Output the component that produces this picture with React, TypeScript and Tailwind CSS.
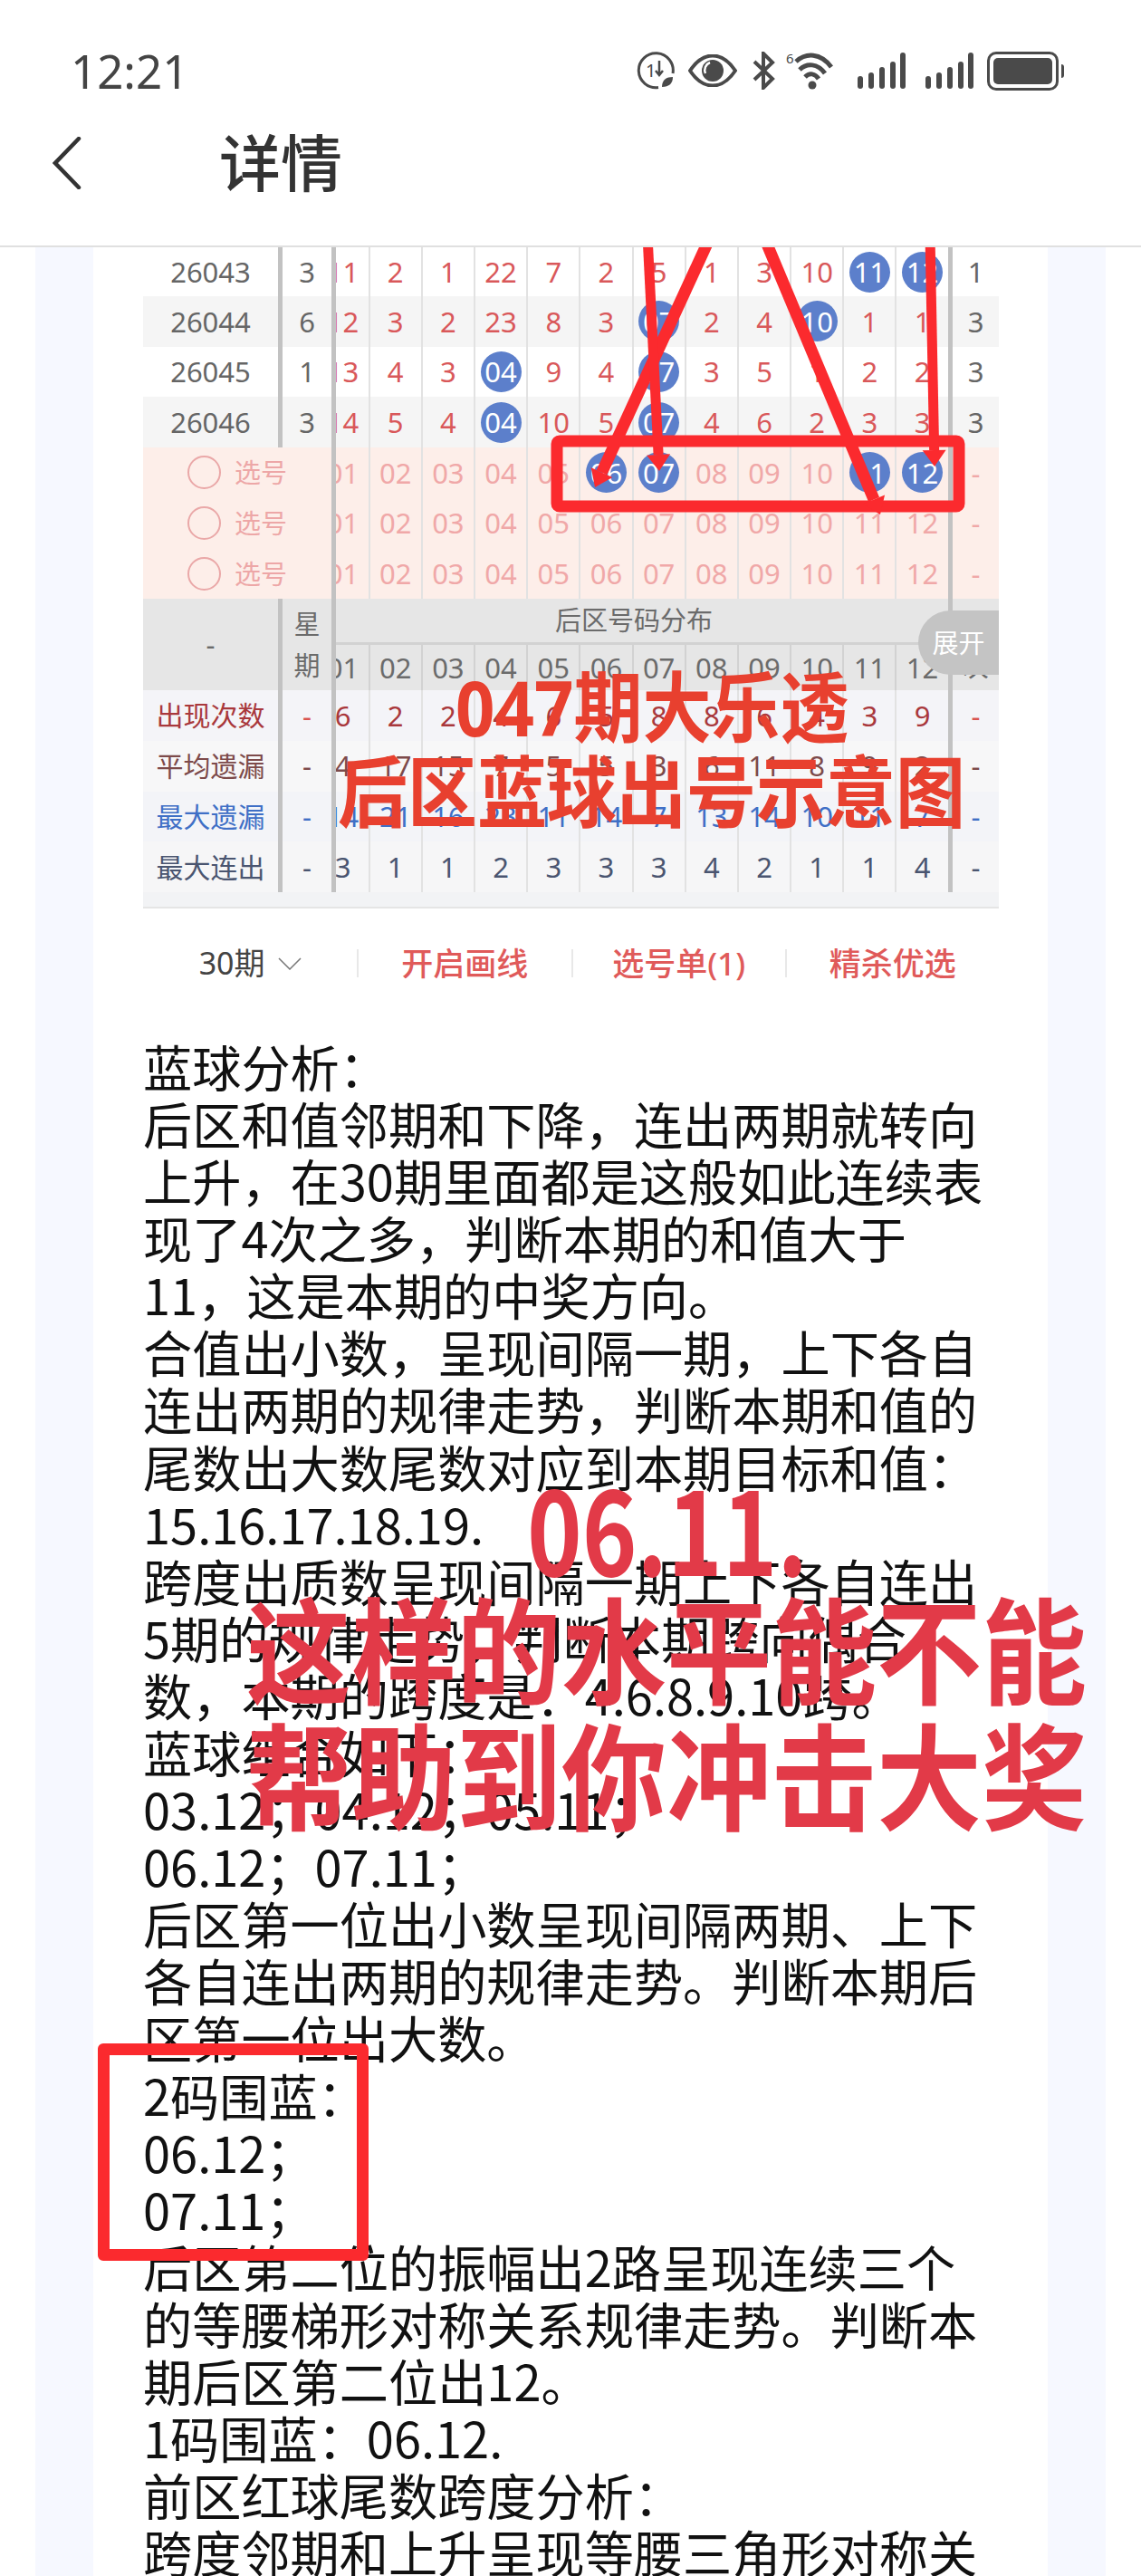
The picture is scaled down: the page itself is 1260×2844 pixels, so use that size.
import { ReactNode } from "react";

type Cell = string | { ball: string };
const b = (ball: string): Cell => ({ ball });

const history: { id: string; week: string; nums: Cell[]; last: string; first: boolean; bg: string }[] = [
  { id: "26043", week: "3", nums: ["11", "2", "1", "22", "7", "2", "5", "1", "3", "10", b("11"), b("12")], last: "1", first: true, bg: "bg-white" },
  { id: "26044", week: "6", nums: ["12", "3", "2", "23", "8", "3", b("07"), "2", "4", b("10"), "1", "1"], last: "3", first: false, bg: "bg-[#f5f5f5]" },
  { id: "26045", week: "1", nums: ["13", "4", "3", b("04"), "9", "4", b("07"), "3", "5", "1", "2", "2"], last: "3", first: false, bg: "bg-white" },
  { id: "26046", week: "3", nums: ["14", "5", "4", b("04"), "10", "5", b("07"), "4", "6", "2", "3", "3"], last: "3", first: false, bg: "bg-[#f5f5f5]" },
];

const numbers = ["01", "02", "03", "04", "05", "06", "07", "08", "09", "10", "11", "12"];

const picks: Cell[][] = [
  ["01", "02", "03", "04", "05", b("06"), b("07"), "08", "09", "10", b("11"), b("12")],
  numbers,
  numbers,
];

const stats = [
  { label: "出现次数", color: "text-[#a9383c]", dash: "text-[#d9534f]", bg: "bg-[#f4f4f8]", nums: ["6", "2", "2", "4", "6", "5", "8", "8", "6", "4", "3", "9"] },
  { label: "平均遗漏", color: "text-[#7d4a4a]", dash: "text-[#7d4a4a]", bg: "bg-[#f7f7f8]", nums: ["4", "17", "15", "7", "5", "5", "3", "6", "11", "8", "9", "2"] },
  { label: "最大遗漏", color: "text-[#3f6fc6]", dash: "text-[#3f6fc6]", bg: "bg-[#f3f4f8]", nums: ["14", "21", "16", "23", "11", "14", "7", "13", "14", "10", "11", "7"] },
  { label: "最大连出", color: "text-[#4a5570]", dash: "text-[#4a5570]", bg: "bg-[#f6f6f7]", nums: ["3", "1", "1", "2", "3", "3", "3", "4", "2", "1", "1", "4"] },
];

const article = [
  "蓝球分析：",
  "后区和值邻期和下降，连出两期就转向上升，在30期里面都是这般如此连续表现了4次之多，判断本期的和值大于11，这是本期的中奖方向。",
  "合值出小数，呈现间隔一期，上下各自连出两期的规律走势，判断本期和值的尾数出大数尾数对应到本期目标和值：",
  "15.16.17.18.19.",
  "跨度出质数呈现间隔一期上下各自连出5期的规律走势，判断本期跨向偶合数，本期的跨度是：4.6.8.9.10跨。",
  "蓝球组合如下：",
  "03.12；04.12；05.11；",
  "06.12；07.11；",
  "后区第一位出小数呈现间隔两期、上下各自连出两期的规律走势。判断本期后区第一位出大数。",
  "2码围蓝：",
  "06.12；",
  "07.11；",
  "后区第二位的振幅出2路呈现连续三个的等腰梯形对称关系规律走势。判断本期后区第二位出12。",
  "1码围蓝：06.12.",
  "前区红球尾数跨度分析：",
  "跨度邻期和上升呈现等腰三角形对称关系规律走势，判断本期跨度继续上升。",
];

const Bars = () => (
  <svg width="53" height="40" viewBox="0 0 53 40" fill="#4a4a4a">
    <rect x="0" y="26" width="6" height="14" rx="3" />
    <rect x="12" y="22" width="6" height="18" rx="3" />
    <rect x="24" y="16" width="6" height="24" rx="3" />
    <rect x="36" y="10" width="6" height="30" rx="3" />
    <rect x="47" y="0" width="6" height="40" rx="3" />
  </svg>
);

const StatusIcons = () => (
  <div className="flex items-center">
    <svg width="42" height="42" viewBox="0 0 42 42" fill="none" stroke="#4a4a4a" strokeWidth="3">
      <path d="M24 39.5A19 19 0 1 1 40 24" />
      <text x="10" y="28" fontSize="20" fill="#4a4a4a" stroke="none">1</text>
      <path d="M25 10v16M21 21l4 5 4-5" strokeWidth="2.5" />
      <path d="M28 39c0-8 5-11 12-11 0 7-4 11-12 11z" fill="#4a4a4a" stroke="none" />
    </svg>
    <svg className="ml-[15px]" width="54" height="36" viewBox="0 0 54 36">
      <path d="M2 18C10 6 18 1.500 27 1.500S44 6 52 18C44 30 36 34.500 27 34.500S10 30 2 18z" fill="none" stroke="#4a4a4a" strokeWidth="4" />
      <circle cx="27" cy="18" r="12" fill="#4a4a4a" />
      <path d="M24 9a9 9 0 0 0-5 12" fill="none" stroke="#fff" strokeWidth="2.500" />
    </svg>
    <svg className="ml-[16px]" width="26" height="42" viewBox="0 0 26 42" fill="none" stroke="#4a4a4a" strokeWidth="4">
      <path d="M3 11l20 19-10 10V2l10 10L3 31" />
    </svg>
    <svg className="ml-[12px]" width="57" height="42" viewBox="0 0 57 42" fill="none" stroke="#4a4a4a" strokeWidth="5">
      <text x="0" y="13" fontSize="15" fill="#4a4a4a" stroke="none">6</text>
      <path d="M11 11C22 1 38 1 50 17" />
      <path d="M15 20C23 12 35 13 43 24" />
      <path d="M21 28C26 23 32 24 36 30" />
      <circle cx="29" cy="37" r="4.500" fill="#4a4a4a" stroke="none" />
    </svg>
    <div className="ml-[22px]"><Bars /></div>
    <div className="ml-[22px]"><Bars /></div>
    <div className="ml-[15px] flex items-center">
      <div className="h-[43px] w-[79px] rounded-[10px] border-[3px] border-[#4a4a4a] p-[4px]">
        <div className="h-full w-full rounded-[5px] bg-[#4a4a4a]" />
      </div>
      <div className="ml-[3px] h-[15px] w-[3px] rounded-r bg-[#4a4a4a]" />
    </div>
  </div>
);

const Num = ({ cell, color }: { cell: Cell; color: string }) => (
  <div className={`flex h-full w-[58.2px] shrink-0 items-center justify-center border-r-2 border-[#e2e2e2] ${color}`}>
    {typeof cell === "string" ? (
      cell
    ) : (
      <span className="flex h-[45px] w-[45px] items-center justify-center rounded-full bg-[#5c7fcb] text-white">{cell.ball}</span>
    )}
  </div>
);

const NumStrip = ({ cells, color }: { cells: Cell[]; color: string }) => (
  <div className="h-full w-[676px] overflow-hidden">
    <div className="-ml-[20.6px] flex h-full w-[699px]">
      {cells.map((c, i) => (
        <Num key={i} cell={c} color={color} />
      ))}
    </div>
  </div>
);

const Row = ({ className, children }: { className: string; children: ReactNode }) => (
  <div className={`flex items-center text-[31px] ${className}`}>{children}</div>
);

const Sep = "border-r-[5px] border-[#c2c2c2]";

const Table = () => (
  <div className="w-[945px]">
    {history.map((r) => (
      <Row key={r.id} className={`${r.first ? "h-[54px]" : "h-[55.7px]"} ${r.bg}`}>
        <div className={`flex h-full w-[154px] items-center justify-center ${Sep} text-[#666]`}>{r.id}</div>
        <div className={`flex h-full w-[59px] items-center justify-center ${Sep} text-[#666]`}>{r.week}</div>
        <NumStrip cells={r.nums} color="text-[#d9585a]" />
        <div className="flex h-full w-[56px] items-center justify-center border-l-[5px] border-[#c2c2c2] text-[#666]">{r.last}</div>
      </Row>
    ))}
    {picks.map((cells, i) => (
      <Row key={i} className="h-[55.7px] bg-[#fdeee9]">
        <div className={`flex h-full w-[213px] items-center ${Sep} pl-[49px] text-[29px] text-[#eda7a7]`}>
          <span className="h-[37px] w-[37px] rounded-full border-2 border-[#eaa8a8]" />
          <span className="ml-[15px]">选号</span>
        </div>
        <NumStrip cells={cells} color="text-[#f0a8a8]" />
        <div className="flex h-full w-[56px] items-center justify-center border-l-[5px] border-[#c2c2c2] text-[#f0a8a8]">-</div>
      </Row>
    ))}
    <div className="relative flex h-[101px] items-stretch bg-[#e6e6e6] text-[31px] text-[#6b6b6b]">
      <div className={`flex w-[154px] items-center justify-center ${Sep}`}>-</div>
      <div className={`flex w-[59px] flex-col items-center justify-center ${Sep} text-[29px] leading-[46px]`}>
        <span>星</span>
        <span>期</span>
      </div>
      <div className="w-[676px] overflow-hidden">
        <div className="-ml-[20.6px] w-[699px]">
          <div className="flex h-[51px] items-center justify-center border-b-[3px] border-[#d2d2d2] text-[29px]">后区号码分布</div>
          <div className="flex h-[50px]">
            {numbers.map((n) => (
              <div key={n} className="flex w-[58.2px] shrink-0 items-center justify-center border-r-2 border-[#d2d2d2]">{n}</div>
            ))}
          </div>
        </div>
      </div>
      <div className="flex w-[56px] items-end justify-center border-l-[5px] border-[#c2c2c2] pb-[12px] text-[29px] leading-none">次</div>
      <div className="absolute top-[13px] right-0 flex h-[71px] w-[89px] items-center justify-center rounded-l-[36px] bg-[#c4c4c4] text-[29px] text-white">展开</div>
    </div>
    {stats.map((s) => (
      <Row key={s.label} className={`h-[55.7px] ${s.bg}`}>
        <div className={`flex h-full w-[154px] items-center justify-center ${Sep} text-[30px] ${s.color}`}>{s.label}</div>
        <div className={`flex h-full w-[59px] items-center justify-center ${Sep} ${s.dash}`}>-</div>
        <NumStrip cells={s.nums} color={s.color} />
        <div className={`flex h-full w-[56px] items-center justify-center border-l-[5px] border-[#c2c2c2] ${s.dash}`}>-</div>
      </Row>
    ))}
    <div className="h-[18px] border-b-2 border-[#e5e5e5] bg-[#f2f3f5]" />
  </div>
);

const Toolbar = () => (
  <div className="flex h-[122px] w-[945px] items-center text-[35px] font-medium text-[#e05a5a]">
    <div className="flex w-1/4 items-center justify-center text-[34px] font-normal text-[#444]">
      30期
      <svg className="ml-[14px]" width="26" height="14" viewBox="0 0 26 14" fill="none" stroke="#777" strokeWidth="1.500">
        <path d="M1 1l12 12L25 1" />
      </svg>
    </div>
    <div className="flex h-[31px] w-1/4 items-center justify-center border-l-2 border-[#e8e8e8]">开启画线</div>
    <div className="flex h-[31px] w-1/4 items-center justify-center border-l-2 border-[#e8e8e8]">选号单(1)</div>
    <div className="flex h-[31px] w-1/4 items-center justify-center border-l-2 border-[#e8e8e8]">精杀优选</div>
  </div>
);

const Arrow = ({ x1, y1, x2, y2, w }: { x1: number; y1: number; x2: number; y2: number; w: number }) => {
  const len = Math.hypot(x2 - x1, y2 - y1);
  const ux = (x2 - x1) / len;
  const uy = (y2 - y1) / len;
  const bx = x2 - ux * 18;
  const by = y2 - uy * 18;
  const head = `${x2},${y2} ${bx - uy * 13},${by + ux * 13} ${bx + uy * 13},${by - ux * 13}`;
  return (
    <>
      <line x1={x1} y1={y1} x2={bx} y2={by} stroke="#fb2a2e" strokeWidth={w} />
      <polygon points={head} fill="#fb2a2e" />
    </>
  );
};

export default function App() {
  return (
    <div className="relative h-[2844px] w-[1260px] overflow-hidden bg-white font-['Noto_Sans','Noto_Sans_CJK_SC',sans-serif]">
      <header className="relative z-20 h-[273px] border-b-2 border-[#e0e0e0] bg-white">
        <div className="flex h-[100px] items-center justify-between pt-[56px] pr-[85px] pl-[78px]">
          <span className="text-[51px] leading-none text-[#444]">12:21</span>
          <StatusIcons />
        </div>
        <div className="mt-[46px] flex items-center pl-[58px]">
          <svg width="32" height="58" viewBox="0 0 32 58" fill="none" stroke="#333" strokeWidth="4.500" strokeLinecap="round">
            <path d="M29 2L3 29l26 27" />
          </svg>
          <h1 className="ml-[152px] text-[68px] leading-none font-medium text-[#333]">详情</h1>
        </div>
      </header>

      <div className="mx-[39px] h-[2571px] bg-[#f6f8ff] px-[64px]">
        <main className="h-full bg-white px-[55px]">
          <Table />
          <Toolbar />
          <div className="w-[945px] pt-[20px] font-['Noto_Sans_CJK_SC',sans-serif] text-[54.2px] leading-[63.1px] text-[#111]">
            {article.map((p, i) => (
              <p key={i}>{p}</p>
            ))}
          </div>
        </main>
      </div>

      {/* annotations painted on top of the article */}
      <svg className="absolute top-0 left-0 z-10" width="1260" height="700">
        <rect x="615" y="487" width="444" height="72" rx="3" fill="none" stroke="#fb2a2e" strokeWidth="13" />
        <Arrow x1={785} y1={260} x2={657} y2={538} w={13} />
        <Arrow x1={715} y1={260} x2={728} y2={520} w={11} />
        <Arrow x1={843} y1={260} x2={972} y2={568} w={13} />
        <Arrow x1={1027} y1={260} x2={1032} y2={515} w={11} />
      </svg>
      <div className="absolute top-[743px] left-[503px] z-10 scale-y-[1.12] text-[76px] leading-none font-bold whitespace-nowrap text-[#e8402f]">047期大乐透</div>
      <div className="absolute top-[835px] left-[373px] z-10 scale-y-[1.12] text-[77px] leading-none font-bold whitespace-nowrap text-[#e8402f]">后区蓝球出号示意图</div>

      <div className="absolute top-[1632px] left-[582px] z-10 scale-y-[1.27] font-['Noto_Sans_CJK_SC',sans-serif] text-[103px] leading-none font-bold whitespace-nowrap text-[#e23a48]">06.11.</div>
      <div className="absolute top-[1758px] left-[272px] z-10 scale-y-[1.1] font-['Noto_Sans_CJK_SC',sans-serif] text-[116px] leading-none font-bold whitespace-nowrap text-[#e23a48]">这样的水平能不能</div>
      <div className="absolute top-[1897px] left-[272px] z-10 scale-y-[1.1] font-['Noto_Sans_CJK_SC',sans-serif] text-[116px] leading-none font-bold whitespace-nowrap text-[#e23a48]">帮助到你冲击大奖</div>

      <div className="absolute top-[2256px] left-[108px] z-10 h-[240px] w-[299px] rounded-[6px] border-[13px] border-[#fb2a2e]" />
    </div>
  );
}
